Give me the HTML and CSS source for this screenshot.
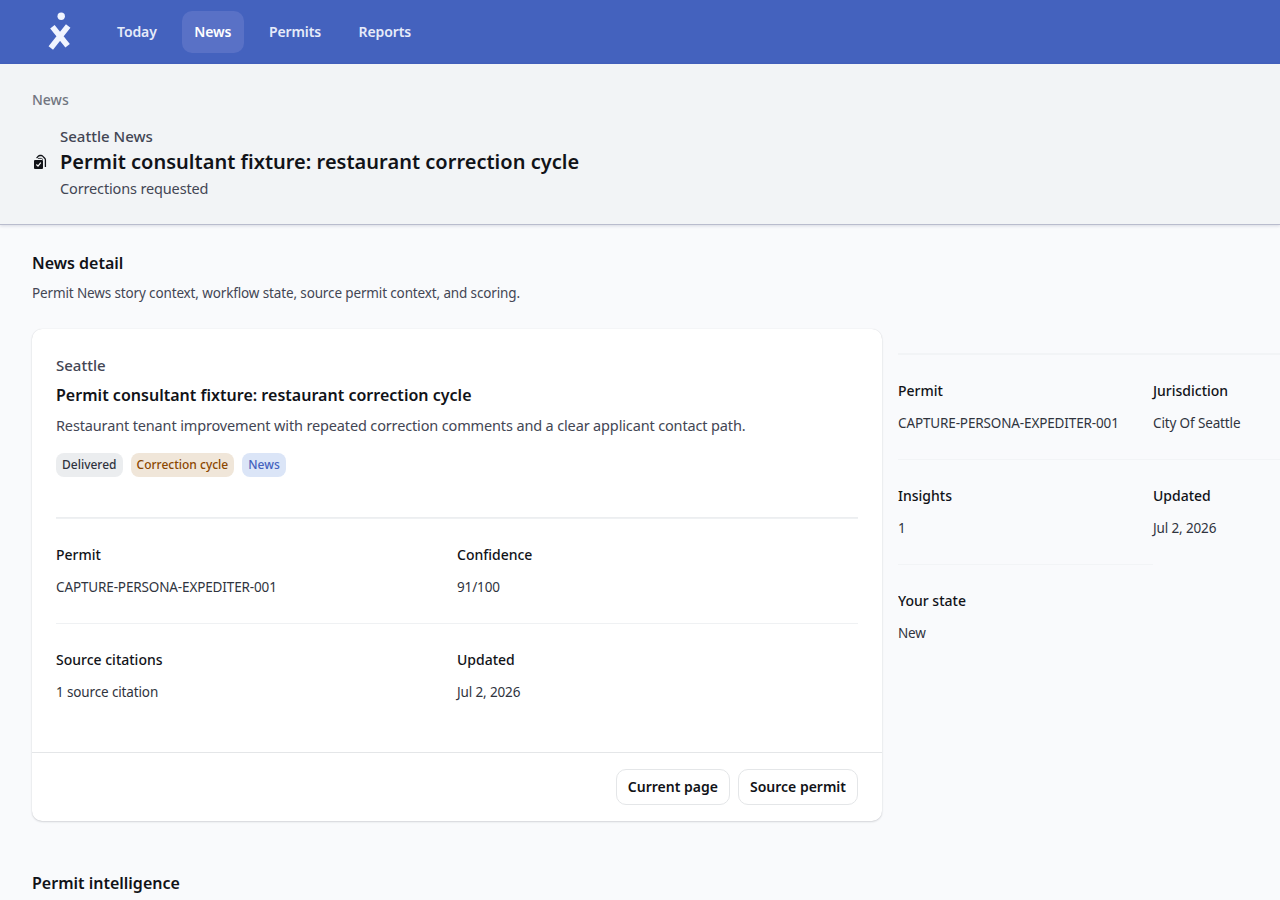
FILE: index.html
```html
<!DOCTYPE html>
<html lang="en">
<head>
    <meta charset="UTF-8">
    <meta name="viewport" content="width=device-width, initial-scale=1.0">
    <title>Permit consultant fixture: restaurant correction cycle</title>
    <link rel="stylesheet" href="styles.css">
</head>
<body>

    <header class="topbar">
        <a href="#" class="logo" aria-label="Home">
            <svg width="26" height="40" viewBox="0 0 26 40">
                <circle cx="14.2" cy="4.200" r="3.700" />
                <path d="M5.400 14.800L20.600 33.700M21.200 13.900L3.800 35.900" />
            </svg>
        </a>
        <nav class="nav">
            <a href="#">Today</a>
            <a href="#" class="active">News</a>
            <a href="#">Permits</a>
            <a href="#">Reports</a>
        </nav>
    </header>

    <!-- Page heading -->
    <section class="page-header">
        <a href="#" class="breadcrumb">News</a>
        <div class="heading">
            <svg class="heading-icon" width="16" height="16" viewBox="0 0 16 16">
                <rect x="2" y="6" width="9" height="9" rx="1" fill="#111318" />
                <path d="M4.400 10.500l1.600 1.600 2.800-3.400" fill="none" stroke="#fff" stroke-width="1.200" />
                <path d="M4.600 4.200L6.300 2.200Q7 1.500 8 1.500h1.200q.8 0 1.400.6l2.100 2.100q.7.700.7 1.600v7.200" fill="none" stroke="#111318" stroke-width="1.300" />
                <path d="M6 4.400h3.400l1.600 1.200" fill="none" stroke="#111318" stroke-width=".8" />
            </svg>
            <div>
                <p class="heading-over">Seattle News</p>
                <h1>Permit consultant fixture: restaurant correction cycle</h1>
                <p class="heading-sub">Corrections requested</p>
            </div>
        </div>
    </section>

    <main class="content">
        <h2>News detail</h2>
        <p class="intro">Permit News story context, workflow state, source permit context, and scoring.</p>

        <div class="columns">
            <article class="card">
                <div class="card-body">
                    <p class="card-place">Seattle</p>
                    <h3>Permit consultant fixture: restaurant correction cycle</h3>
                    <p class="card-text">Restaurant tenant improvement with repeated correction comments and a clear applicant contact path.</p>
                    <div class="tags">
                        <span class="tag">Delivered</span>
                        <span class="tag tag-warning">Correction cycle</span>
                        <span class="tag tag-info">News</span>
                    </div>
                    <dl class="facts">
                        <div><dt>Permit</dt><dd>CAPTURE-PERSONA-EXPEDITER-001</dd></div>
                        <div><dt>Confidence</dt><dd>91/100</dd></div>
                        <div><dt>Source citations</dt><dd>1 source citation</dd></div>
                        <div><dt>Updated</dt><dd>Jul 2, 2026</dd></div>
                    </dl>
                </div>
                <footer class="card-footer">
                    <a href="#" class="button">Current page</a>
                    <a href="#" class="button">Source permit</a>
                </footer>
            </article>

            <aside class="sidebar">
                <dl class="facts">
                    <div><dt>Permit</dt><dd>CAPTURE-PERSONA-EXPEDITER-001</dd></div>
                    <div><dt>Jurisdiction</dt><dd>City Of Seattle</dd></div>
                    <div><dt>Insights</dt><dd>1</dd></div>
                    <div><dt>Updated</dt><dd>Jul 2, 2026</dd></div>
                    <div><dt>Your state</dt><dd>New</dd></div>
                </dl>
            </aside>
        </div>

        <h2>Permit intelligence</h2>
    </main>

</body>
</html>
```
FILE: styles.css
```css
* {
    box-sizing: border-box;
}

body {
    margin: 0;
    height: 900px;
    overflow: hidden;
    font-family: "Noto Sans", sans-serif;
    font-size: 14px;
    line-height: 24px;
    color: #111318;
    background-color: #f9fafc;
}

h1, h2, h3, p, dl, dd {
    margin: 0;
}

a {
    color: inherit;
    text-decoration: none;
}

.topbar {
    display: flex;
    align-items: center;
    height: 64px;
    padding-left: 47px;
    background-color: #4462be;
}

.logo {
    display: flex;
    margin-right: 31.5px;
}

.logo svg {
    fill: #f0f4ff;
    stroke: none;
}

.logo path {
    stroke: #f0f4ff;
    stroke-width: 5.7;
}

.nav {
    display: flex;
    gap: 12.5px;
}

.nav a {
    padding: 9px 12.5px;
    border-radius: 10px;
    font-weight: 600;
    letter-spacing: -0.1px;
    color: #e6ebf9;
}

.nav .active {
    color: #fff;
    background-color: #5971c6;
}

.page-header {
    height: 161px;
    padding: 24px 32px;
    background-color: #f2f4f6;
    border-bottom: 1px solid #b9bccd;
    box-shadow: 0 1px 3px rgba(30, 35, 80, 0.15);
}

.breadcrumb {
    display: block;
    font-weight: 500;
    color: #717580;
}

.heading {
    display: flex;
    align-items: center;
    gap: 12px;
    margin-top: 12px;
}

.heading-over {
    font-size: 15px;
    font-weight: 500;
    color: #434654;
}

.heading-sub {
    font-size: 14.5px;
    letter-spacing: -0.01em;
    color: #434654;
}

h1 {
    font-size: 20px;
    font-weight: 600;
    line-height: 28px;
    letter-spacing: 0.02px;
}

.content {
    padding: 26px 32px;
}

h2 {
    font-size: 16px;
    font-weight: 600;
}

.intro {
    margin-top: 6px;
    font-size: 13.5px;
    letter-spacing: -0.01em;
    color: #434654;
}

.columns {
    display: grid;
    grid-template-columns: 850px 510px;
    gap: 16px;
    margin: 24px 0 50px;
}

.card {
    background-color: #fff;
    border-radius: 10px;
    box-shadow: 0 0 1px rgba(20, 25, 40, 0.15), 0 1px 2px rgba(20, 25, 40, 0.15);
}

.card-body {
    padding: 24px;
}

.card-place {
    font-size: 15px;
    font-weight: 500;
    color: #434654;
}

h3 {
    margin-top: 6px;
    font-size: 16px;
    font-weight: 600;
    letter-spacing: 0.02px;
}

.card-text {
    margin-top: 6px;
    font-size: 14.5px;
    letter-spacing: -0.01em;
    color: #434654;
}

.tags {
    display: flex;
    gap: 8px;
    margin: 16px 0 40px;
}

.tag {
    padding: 0 6px;
    border-radius: 8px;
    font-size: 12px;
    font-weight: 500;
    color: #30343e;
    background-color: #ebedef;
}

.tag-warning {
    color: #8b4700;
    background-color: #f0e6d9;
}

.tag-info {
    color: #4462be;
    background-color: #dbe5f7;
}

.facts {
    display: grid;
    grid-template-columns: 1fr 1fr;
    border-top: 1px solid #eceef0;
}

.facts div {
    padding: 24px 0;
    border-top: 1px solid #eff1f3;
}

dt {
    font-weight: 500;
}

dd {
    margin-top: 8px;
    font-size: 13.5px;
    letter-spacing: -0.01em;
    color: #30343e;
}

.card-footer {
    display: flex;
    justify-content: flex-end;
    gap: 8px;
    padding: 16px 24px;
    border-top: 1px solid #e4e6e8;
}

.button {
    padding: 5px 11px;
    border: 1px solid #e4e6e8;
    border-radius: 10px;
    font-weight: 600;
}

.sidebar {
    width: 382px;
    padding-top: 24px;
    overflow: hidden;
}

.sidebar .facts {
    width: 510px;
    border-top-color: #f2f4f6;
}

.sidebar .facts div {
    border-top-color: #f2f4f6;
}
```
